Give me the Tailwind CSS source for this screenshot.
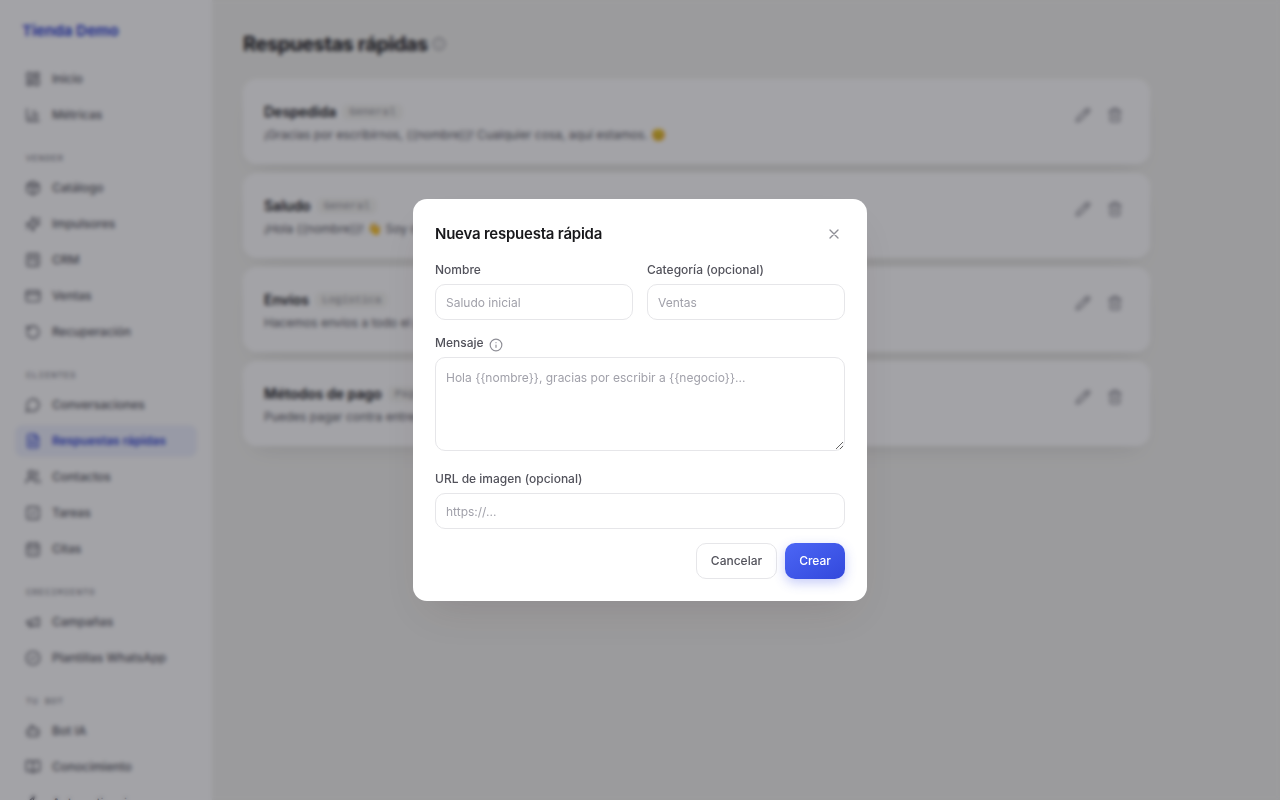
<!DOCTYPE html>
<html lang="es">
<head>
    <meta charset="UTF-8" />
    <meta name="viewport" content="width=device-width, initial-scale=1" />
    <title>Respuestas rápidas - Tienda Demo</title>
    <script src="https://cdn.jsdelivr.net/npm/@tailwindcss/browser@4"></script>
</head>
<body class="h-screen overflow-hidden bg-[#f3f3ef] font-['Inter',sans-serif] text-xs text-[#18181b] [&_svg]:[stroke-linecap:round] [&_svg]:[stroke-linejoin:round]">
    <!-- Icons -->
    <svg class="hidden">
        <symbol id="i-home" viewBox="0 0 24 24"><rect x="3" y="3" width="7" height="9" rx="1"/><rect x="14" y="3" width="7" height="5" rx="1"/><rect x="14" y="12" width="7" height="9" rx="1"/><rect x="3" y="16" width="7" height="5" rx="1"/></symbol>
        <symbol id="i-chart" viewBox="0 0 24 24"><path d="M3 3v16a2 2 0 0 0 2 2h16M18 17V9M13 17V5M8 17v-3"/></symbol>
        <symbol id="i-box" viewBox="0 0 24 24"><path d="M11 21.7a2 2 0 0 0 2 0l7-4a2 2 0 0 0 1-1.7V8a2 2 0 0 0-1-1.7l-7-4a2 2 0 0 0-2 0l-7 4A2 2 0 0 0 3 8v8a2 2 0 0 0 1 1.7zM12 22V12M3.3 7 12 12l8.7-5M7.5 4.3l9 5.1"/></symbol>
        <symbol id="i-spark" viewBox="0 0 24 24"><path d="M9.9 15.5A2 2 0 0 0 8.5 14.1l-6.1-1.6a.5.5 0 0 1 0-1l6.1-1.6A2 2 0 0 0 9.9 8.5l1.6-6.1a.5.5 0 0 1 1 0l1.6 6.1a2 2 0 0 0 1.4 1.4l6.1 1.6a.5.5 0 0 1 0 1l-6.1 1.6a2 2 0 0 0-1.4 1.4l-1.6 6.1a.5.5 0 0 1-1 0zM20 3v4M22 5h-4M4 17v2M5 18H3"/></symbol>
        <symbol id="i-crm" viewBox="0 0 24 24"><rect x="3" y="3" width="18" height="18" rx="2"/><path d="M8 7v7M12 7v4M16 7v9"/></symbol>
        <symbol id="i-card" viewBox="0 0 24 24"><rect x="2" y="4" width="20" height="16" rx="2"/><path d="M2 9h20"/></symbol>
        <symbol id="i-rotate" viewBox="0 0 24 24"><path d="M3 12a9 9 0 1 0 9-9 9.75 9.75 0 0 0-6.7 2.7L3 8M3 3v5h5"/></symbol>
        <symbol id="i-chat" viewBox="0 0 24 24"><path d="M7.9 20A9 9 0 1 0 4 16.1L2 22Z"/></symbol>
        <symbol id="i-file" viewBox="0 0 24 24"><path d="M15 2H6a2 2 0 0 0-2 2v16a2 2 0 0 0 2 2h12a2 2 0 0 0 2-2V7ZM14 2v4a2 2 0 0 0 2 2h4M10 9H8M16 13H8M16 17H8"/></symbol>
        <symbol id="i-users" viewBox="0 0 24 24"><path d="M16 21v-2a4 4 0 0 0-4-4H6a4 4 0 0 0-4 4v2M22 21v-2a4 4 0 0 0-3-3.9M16 3.1a4 4 0 0 1 0 7.8"/><circle cx="9" cy="7" r="4"/></symbol>
        <symbol id="i-check" viewBox="0 0 24 24"><rect x="3" y="3" width="18" height="18" rx="2"/><path d="m9 12 2 2 4-4"/></symbol>
        <symbol id="i-cal" viewBox="0 0 24 24"><rect x="3" y="4" width="18" height="18" rx="2"/><path d="M8 2v4M16 2v4M3 10h18M8 14h.01M12 14h.01M16 14h.01M8 18h.01M12 18h.01M16 18h.01"/></symbol>
        <symbol id="i-mega" viewBox="0 0 24 24"><path d="m3 11 18-5v12L3 14zM11.6 16.8a3 3 0 1 1-5.8-1.6"/></symbol>
        <symbol id="i-ok" viewBox="0 0 24 24"><circle cx="12" cy="12" r="10"/><path d="m9 12 2 2 4-4"/></symbol>
        <symbol id="i-bot" viewBox="0 0 24 24"><path d="M12 8V4H8M2 14h2M20 14h2M15 13v2M9 13v2"/><rect x="4" y="8" width="16" height="12" rx="2"/></symbol>
        <symbol id="i-book" viewBox="0 0 24 24"><path d="M12 7v14M3 18a1 1 0 0 1-1-1V4a1 1 0 0 1 1-1h5a4 4 0 0 1 4 4 4 4 0 0 1 4-4h5a1 1 0 0 1 1 1v13a1 1 0 0 1-1 1h-6a3 3 0 0 0-3 3 3 3 0 0 0-3-3z"/></symbol>
        <symbol id="i-zap" viewBox="0 0 24 24"><path d="M4 14a1 1 0 0 1-.8-1.6l9.9-10.2a.5.5 0 0 1 .9.5l-2 6A1 1 0 0 0 13 10h7a1 1 0 0 1 .8 1.6l-9.9 10.2a.5.5 0 0 1-.9-.5l2-6A1 1 0 0 0 11 14z"/></symbol>
        <symbol id="i-pencil" viewBox="0 0 24 24"><path d="M21.2 6.8a2.8 2.8 0 0 0-4-4L3.8 16.2a2 2 0 0 0-.5.8L2 21.4a.5.5 0 0 0 .6.6L7 20.7a2 2 0 0 0 .8-.5zM15 5l4 4"/></symbol>
        <symbol id="i-trash" viewBox="0 0 24 24"><path d="M3 6h18M19 6v14a2 2 0 0 1-2 2H7a2 2 0 0 1-2-2V6M8 6V4a2 2 0 0 1 2-2h4a2 2 0 0 1 2 2v2M10 11v6M14 11v6"/></symbol>
        <symbol id="i-info" viewBox="0 0 24 24"><circle cx="12" cy="12" r="10"/><path d="M12 16v-4M12 8h.01"/></symbol>
        <symbol id="i-x" viewBox="0 0 24 24"><path d="M18 6 6 18M6 6l12 12"/></symbol>
    </svg>

    <div class="flex h-screen">
        <!-- Sidebar -->
        <aside class="w-[212px] shrink-0 overflow-hidden bg-white px-[15px] text-[#5a5a63]">
            <div class="px-[7px] pt-5 pb-[21px] text-[15px] leading-[22px] font-bold text-[#3346d3]">Tienda Demo</div>
            <nav class="flex flex-col gap-1 font-medium [&_a]:flex [&_a]:h-8 [&_a]:shrink-0 [&_a]:items-center [&_a]:gap-[11px] [&_a]:rounded-lg [&_a]:px-2.5 [&_h2]:mt-4 [&_h2]:h-[17px] [&_h2]:px-[11px] [&_h2]:font-['Liberation_Mono',monospace] [&_h2]:text-[9px] [&_h2]:leading-[17px] [&_h2]:tracking-widest [&_h2]:text-[#71717a] [&_svg]:size-4 [&_svg]:fill-none [&_svg]:stroke-current [&_svg]:stroke-2">
                <a href="#"><svg><use href="#i-home"/></svg>Inicio</a>
                <a href="#"><svg><use href="#i-chart"/></svg>Métricas</a>
                <h2>VENDER</h2>
                <a href="#"><svg><use href="#i-box"/></svg>Catálogo</a>
                <a href="#"><svg><use href="#i-spark"/></svg>Impulsores</a>
                <a href="#"><svg><use href="#i-crm"/></svg>CRM</a>
                <a href="#"><svg><use href="#i-card"/></svg>Ventas</a>
                <a href="#"><svg><use href="#i-rotate"/></svg>Recuperación</a>
                <h2>CLIENTES</h2>
                <a href="#"><svg><use href="#i-chat"/></svg>Conversaciones</a>
                <a href="#" class="bg-[#eef1fd] font-semibold text-[#3346d3]"><svg><use href="#i-file"/></svg>Respuestas rápidas</a>
                <a href="#"><svg><use href="#i-users"/></svg>Contactos</a>
                <a href="#"><svg><use href="#i-check"/></svg>Tareas</a>
                <a href="#"><svg><use href="#i-cal"/></svg>Citas</a>
                <h2>CRECIMIENTO</h2>
                <a href="#"><svg><use href="#i-mega"/></svg>Campañas</a>
                <a href="#"><svg><use href="#i-ok"/></svg>Plantillas WhatsApp</a>
                <h2>TU BOT</h2>
                <a href="#"><svg><use href="#i-bot"/></svg>Bot IA</a>
                <a href="#"><svg><use href="#i-book"/></svg>Conocimiento</a>
                <a href="#"><svg><use href="#i-zap"/></svg>Automatizaciones</a>
            </nav>
        </aside>

        <!-- Quick replies -->
        <main class="min-w-0 flex-1 px-[31px] pt-[30px]">
            <div class="flex items-center gap-1">
                <h1 class="text-xl leading-7 font-bold tracking-[-0.02em]">Respuestas rápidas</h1>
                <svg class="size-3.5 fill-none stroke-[#8b8b93] stroke-2"><use href="#i-info"/></svg>
            </div>
            <ul class="mt-[21px] flex max-w-[907px] flex-col gap-[9px] [&_button]:p-2 [&_h2]:text-sm [&_h2]:leading-5 [&_h2]:font-semibold [&_li]:flex [&_li]:h-[85px] [&_li]:rounded-[14px] [&_li]:bg-white [&_li]:pt-[23px] [&_li]:pr-[19px] [&_li]:pl-[21px] [&_li]:shadow-[0_12px_24px_-12px_rgba(24,24,27,0.12)] [&_p]:mt-[3px] [&_p]:leading-5 [&_p]:text-[#5a5a63] [&_span]:rounded-md [&_span]:bg-[#f6f6f2] [&_span]:px-[7px] [&_span]:font-['Liberation_Mono',monospace] [&_span]:text-[11px] [&_span]:leading-4 [&_span]:text-[#8b8b93] [&_svg]:size-4 [&_svg]:fill-none [&_svg]:stroke-[#85858d] [&_svg]:stroke-2">
                <li>
                    <div class="flex-1">
                        <div class="flex items-center gap-1.5"><h2>Despedida</h2><span>General</span></div>
                        <p>¡Gracias por escribirnos, {{nombre}}! Cualquier cosa, aquí estamos. 😊</p>
                    </div>
                    <div class="-mt-[3px] flex items-start"><button aria-label="Editar"><svg><use href="#i-pencil"/></svg></button><button aria-label="Eliminar"><svg><use href="#i-trash"/></svg></button></div>
                </li>
                <li>
                    <div class="flex-1">
                        <div class="flex items-center gap-1.5"><h2>Saludo</h2><span>General</span></div>
                        <p>¡Hola {{nombre}}! 👋 Soy de</p>
                    </div>
                    <div class="-mt-[3px] flex items-start"><button aria-label="Editar"><svg><use href="#i-pencil"/></svg></button><button aria-label="Eliminar"><svg><use href="#i-trash"/></svg></button></div>
                </li>
                <li>
                    <div class="flex-1">
                        <div class="flex items-center gap-1.5"><h2>Envíos</h2><span>Logística</span></div>
                        <p>Hacemos envíos a todo el país.</p>
                    </div>
                    <div class="-mt-[3px] flex items-start"><button aria-label="Editar"><svg><use href="#i-pencil"/></svg></button><button aria-label="Eliminar"><svg><use href="#i-trash"/></svg></button></div>
                </li>
                <li>
                    <div class="flex-1">
                        <div class="flex items-center gap-1.5"><h2>Métodos de pago</h2><span>Pagos</span></div>
                        <p>Puedes pagar contra entrega.</p>
                    </div>
                    <div class="-mt-[3px] flex items-start"><button aria-label="Editar"><svg><use href="#i-pencil"/></svg></button><button aria-label="Eliminar"><svg><use href="#i-trash"/></svg></button></div>
                </li>
            </ul>
        </main>
    </div>

    <!-- New reply dialog -->
    <div class="fixed inset-0 flex items-center justify-center bg-[#0e0e18]/38 backdrop-blur-[2px]">
        <form role="dialog" aria-labelledby="dialogTitle" class="w-full max-w-[454px] rounded-[14px] bg-white p-[22px] shadow-[0_20px_40px_-16px_rgba(60,24,27,0.15)] [&_input]:h-9 [&_input]:w-full [&_input]:rounded-[10px] [&_input]:border [&_input]:border-[#e6e6e9] [&_input]:px-2.5 [&_input]:pt-px [&_input]:placeholder:text-[#a1a1aa] [&_label]:font-medium [&_label]:leading-[17px] [&_label]:text-[#52525b]">
            <div class="mb-3.5 flex h-[26px] items-center justify-between">
                <h2 id="dialogTitle" class="text-[15px] font-semibold tracking-[-0.015em]">Nueva respuesta rápida</h2>
                <button type="button" aria-label="Cerrar" class="p-[3px]"><svg class="size-4 fill-none stroke-[#8e8e96] stroke-2"><use href="#i-x"/></svg></button>
            </div>
            <div class="mb-3.5 grid grid-cols-2 gap-3.5">
                <div class="flex flex-col gap-1.5">
                    <label for="nombre">Nombre</label>
                    <input id="nombre" type="text" placeholder="Saludo inicial" />
                </div>
                <div class="flex flex-col gap-1.5">
                    <label for="categoria">Categoría (opcional)</label>
                    <input id="categoria" type="text" placeholder="Ventas" />
                </div>
            </div>
            <div class="mb-[19px] flex flex-col gap-1.5">
                <div class="flex h-[17px] items-start gap-[5px]">
                    <label for="mensaje">Mensaje</label>
                    <svg class="mt-1 size-3.5 shrink-0 fill-none stroke-[#8e8e96] stroke-2"><use href="#i-info"/></svg>
                </div>
                <textarea id="mensaje" class="h-[94px] w-full resize-y rounded-[10px] border border-[#e6e6e9] px-2.5 py-2.5 leading-5 placeholder:text-[#a1a1aa]" placeholder="Hola {{nombre}}, gracias por escribir a {{negocio}}..."></textarea>
            </div>
            <div class="mb-3.5 flex flex-col gap-1.5">
                <label for="imagen">URL de imagen (opcional)</label>
                <input id="imagen" type="text" placeholder="https://..." />
            </div>
            <div class="flex justify-end gap-2">
                <button type="button" class="h-9 rounded-[10px] border border-[#e6e6e9] px-3.5 font-medium text-[#52525b]">Cancelar</button>
                <button type="submit" class="h-9 rounded-[10px] bg-linear-to-br from-[#4c66f5] to-[#3348dc] px-3.5 font-medium text-white shadow-[0_4px_12px_rgba(67,86,235,0.3)]">Crear</button>
            </div>
        </form>
    </div>
</body>
</html>
